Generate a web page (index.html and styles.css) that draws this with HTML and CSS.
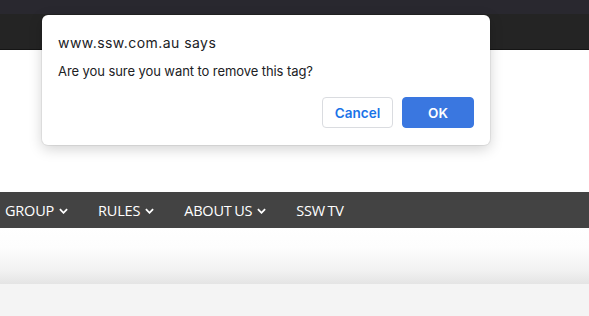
FILE: index.html
```html
<!DOCTYPE html>
<html lang="en">
<head>
<meta charset="utf-8">
<title>Remove tag</title>
<link rel="stylesheet" href="styles.css">
</head>
<body>
<div class="page">
  <div class="chrome-top"></div>
  <div class="chrome-bar"></div>
  <div class="header"></div>
  <nav class="nav">
    <span class="nav-item">GROUP <svg class="chev" viewBox="0 0 10 6" width="9" height="6"><path d="M1 1l4 4 4-4" fill="none" stroke="#fff" stroke-width="2"/></svg></span>
    <span class="nav-item">RULES <svg class="chev" viewBox="0 0 10 6" width="9" height="6"><path d="M1 1l4 4 4-4" fill="none" stroke="#fff" stroke-width="2"/></svg></span>
    <span class="nav-item">ABOUT US <svg class="chev" viewBox="0 0 10 6" width="9" height="6"><path d="M1 1l4 4 4-4" fill="none" stroke="#fff" stroke-width="2"/></svg></span>
    <span class="nav-item">SSW TV</span>
  </nav>
  <div class="fade"></div>
  <div class="rest"></div>
</div>
<div class="dialog">
  <div class="dialog-title">www.ssw.com.au says</div>
  <div class="dialog-msg">Are you sure you want to remove this tag?</div>
  <div class="dialog-actions">
    <button class="btn btn-cancel">Cancel</button>
    <button class="btn btn-ok">OK</button>
  </div>
</div>
</body>
</html>
```
FILE: styles.css
```css
html, body {
  margin: 0;
  padding: 0;
  height: 100%;
  overflow: hidden;
}
body {
  background: #f4f4f4;
  font-family: Inter, "Liberation Sans", sans-serif;
}
.page {
  display: flex;
  flex-direction: column;
  height: 100%;
}
.chrome-top {
  height: 14px;
  background: #29282f;
}
.chrome-bar {
  height: 35px;
  background: #242424;
  border-bottom: 1px solid #151515;
}
.header {
  height: 142px;
  background: #ffffff;
}
.nav {
  height: 36px;
  background: #434343;
  display: flex;
  align-items: center;
  gap: 30px;
  padding-left: 5px;
  font-family: "Open Sans", sans-serif;
  font-size: 14.5px;
  color: #ffffff;
}
.nav-item {
  display: flex;
  align-items: center;
  gap: 5px;
  white-space: nowrap;
  word-spacing: -1px;
  letter-spacing: -0.2px;
}
.chev {
  display: block;
  margin-top: 1px;
}
.fade {
  height: 56px;
  background: linear-gradient(#ffffff 0%, #fdfdfd 35%, #f2f2f2 75%, #e4e4e4 100%);
}
.rest {
  flex: 1;
  background: #f4f4f4;
}
.dialog {
  position: absolute;
  left: 42px;
  top: 15px;
  width: 448px;
  height: 130px;
  box-sizing: border-box;
  background: #fff;
  border-radius: 6px;
  box-shadow: 0 0 0 1px rgba(0,0,0,0.06), 0 4px 14px rgba(0,0,0,0.18);
  padding: 19px 16px 0 16px;
  color: #202124;
}
.dialog-title {
  font-size: 14px;
  line-height: 18px;
  letter-spacing: 0.45px;
}
.dialog-msg {
  font-size: 13px;
  line-height: 17px;
  margin-top: 11px;
  letter-spacing: -0.08px;
}
.dialog-actions {
  display: flex;
  justify-content: flex-end;
  gap: 9px;
  margin-top: 17px;
}
.btn {
  height: 31px;
  border-radius: 4px;
  font-family: Inter, "Liberation Sans", sans-serif;
  font-size: 13.5px;
  font-weight: 600;
  padding: 0;
  cursor: pointer;
}
.btn-cancel {
  width: 71px;
  background: #fff;
  border: 1px solid #dadce0;
  color: #1a73e8;
}
.btn-ok {
  width: 72px;
  background: #3a77e0;
  border: 1px solid #3a77e0;
  color: #fff;
}
```
